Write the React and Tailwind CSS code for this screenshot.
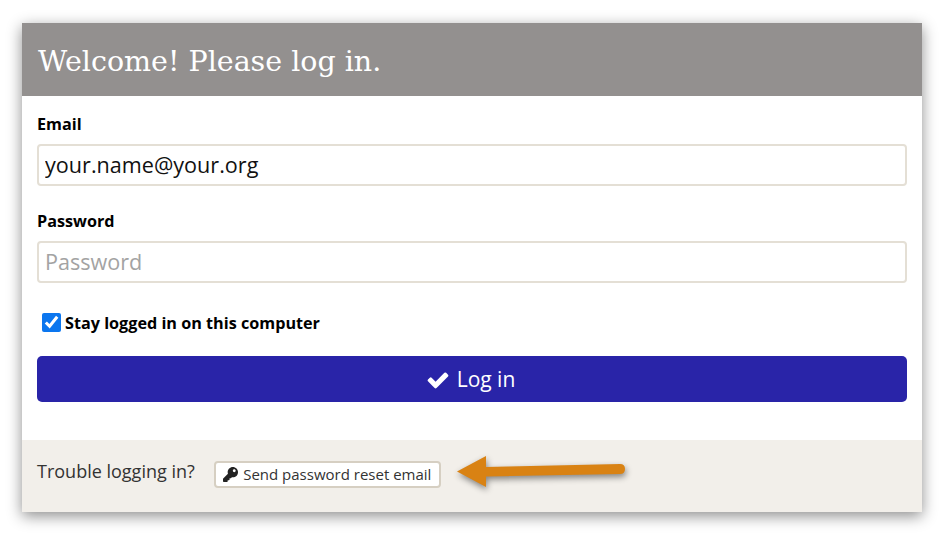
import React from "react";
import { FaKey } from "react-icons/fa";

function Arrow() {
  return (
    <svg
      className="absolute left-[435px] top-[15px] overflow-visible"
      width="168"
      height="40"
      viewBox="0 0 168 40"
      style={{ filter: "drop-shadow(1px 3px 3px rgba(0,0,0,0.45))" }}
    >
      <path
        d="M29 1 L29 12 L163 9 Q168 9 168 14 Q168 19 163 19 L29 21.500 L29 32 L0 16.500 Z"
        fill="#d98213"
      />
    </svg>
  );
}

function CheckIcon() {
  return (
    <svg className="size-[24px]" viewBox="0 0 1792 1792" fill="currentColor">
      <path d="M1671 566q0 40-28 68l-724 724-136 136q-28 28-68 28t-68-28l-136-136-362-362q-28-28-28-68t28-68l136-136q28-28 68-28t68 28l294 295 656-657q28-28 68-28t68 28l136 136q28 28 28 68z" />
    </svg>
  );
}

export default function App() {
  return (
    <div className="h-[535px] w-[945px] bg-white pl-[22px] pt-[23px] font-['Open_Sans',sans-serif]">
      <div className="flex h-[489px] w-[900px] flex-col bg-white shadow-[0_4px_14px_rgba(0,0,0,0.45)]">
        <div className="flex h-[73px] items-center bg-[#93908f] px-4 pt-[5px]">
          <h1 className="font-['DejaVu_Serif',serif] text-[28.500px] leading-none font-normal text-white">
            Welcome! Please log in.
          </h1>
        </div>

        <form className="flex flex-1 flex-col px-[15px] pt-[17px]">
          <label className="text-[16.200px] leading-[22px] font-bold text-black">Email</label>
          <input
            defaultValue="your.name@your.org"
            className="mt-[9px] h-[42px] rounded-[4px] border-2 border-[#e4dfd5] px-[6px] pb-[2px] text-[21.600px] text-[#111] outline-none"
          />
          <label className="mt-[24px] text-[16.200px] leading-[22px] font-bold text-black">Password</label>
          <input
            placeholder="Password"
            className="mt-[9px] h-[42px] rounded-[4px] border-2 border-[#e4dfd5] px-[6px] pb-[2px] text-[21.600px] text-[#111] outline-none placeholder:text-[#a3a3a3]"
          />
          <label className="mt-[30px] flex h-[19px] items-center pl-[5px] text-[16.200px] font-bold text-black">
            <input type="checkbox" defaultChecked className="m-0 size-[19px] accent-[#0b76ef]" />
            <span className="ml-[4px] pt-[2px]">Stay logged in on this computer</span>
          </label>
          <button
            type="button"
            className="mt-[24px] flex h-[46px] items-center justify-center gap-[7px] rounded-[5px] bg-[#2924a8] pt-[1px] pr-[3px] text-[21px] text-white"
          >
            <CheckIcon />
            Log in
          </button>
        </form>

        <div className="relative flex h-[72px] items-start bg-[#f2efea] pl-[15px] pt-[19px]">
          <span className="text-[18px] leading-[24px] text-[#333]">Trouble logging in?</span>
          <button
            type="button"
            className="mt-[2px] ml-[19px] flex h-[27px] w-[227px] items-center justify-center gap-[5px] rounded-[4px] border-2 border-[#d6cfc2] bg-white text-[15px] text-[#333]"
          >
            <FaKey className="size-[15px] text-[#222]" />
            Send password reset email
          </button>
          <Arrow />
        </div>
      </div>
    </div>
  );
}
